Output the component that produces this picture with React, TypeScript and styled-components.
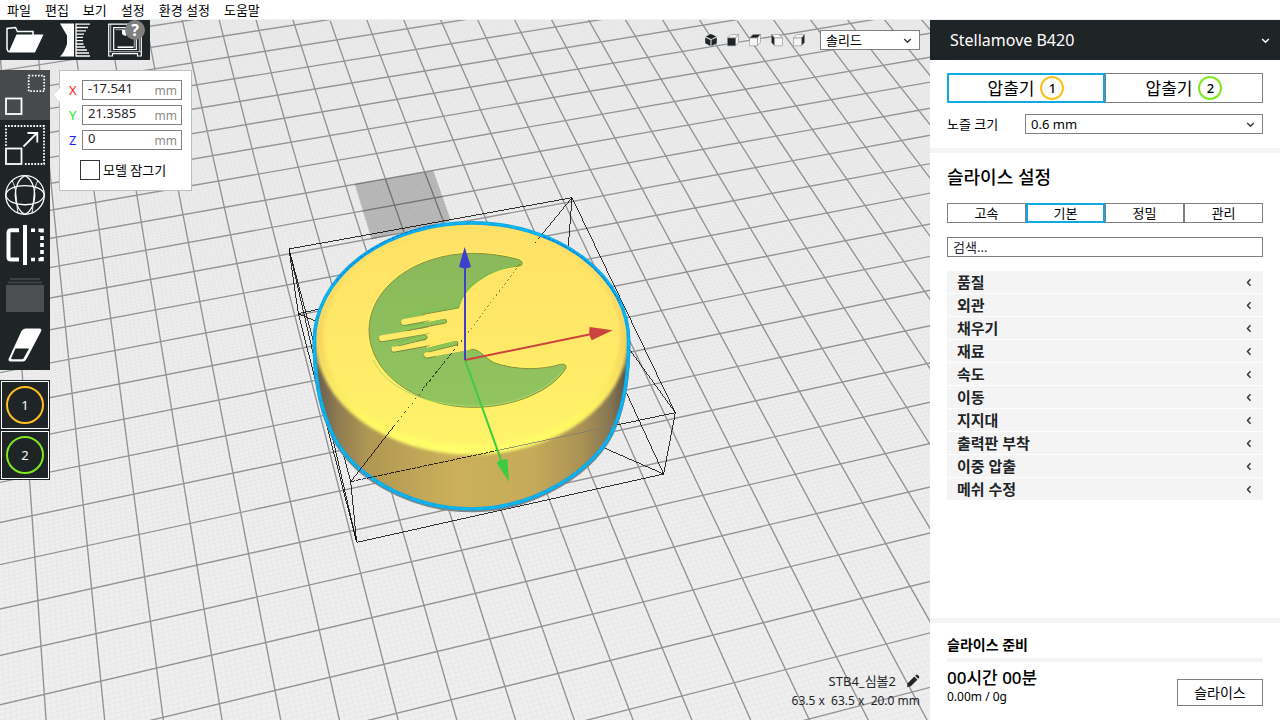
import React from 'react';
import styled, { createGlobalStyle } from 'styled-components';

const dark = '#1f2427';
const accent = '#11a9e2';
const line = '#7f7f7f';
const soft = '#f4f4f4';

const GlobalStyle = createGlobalStyle`
  *, *::before, *::after { box-sizing: border-box; }
  body {
    margin: 0;
    background: #fff;
    color: #000;
    font-family: "Noto Sans", "Noto Sans CJK KR", sans-serif;
    font-size: 13px;
    line-height: 20px;
  }
  button, input, select { font: inherit; color: inherit; margin: 0; }
  button { cursor: pointer; }
`;

/* ---------- build plate projection ---------- */

type Point = [number, number];

const plateAnchors: { cell: Point; screen: Point }[] = [
  { cell: [-1, 4], screen: [44.3, 694.3] },
  { cell: [0, -9], screen: [53.7, 209.7] },
  { cell: [22, -9], screen: [883.3, 65.3] },
  { cell: [14, 7], screen: [886.3, 644] },
];

function solve(matrix: number[][]): number[] {
  const n = matrix.length;
  const m = matrix.map((r) => [...r]);
  for (let c = 0; c < n; c++) {
    let pivot = c;
    for (let r = c + 1; r < n; r++) if (Math.abs(m[r][c]) > Math.abs(m[pivot][c])) pivot = r;
    [m[c], m[pivot]] = [m[pivot], m[c]];
    for (let r = 0; r < n; r++) {
      if (r === c) continue;
      const f = m[r][c] / m[c][c];
      for (let k = c; k <= n; k++) m[r][k] -= f * m[c][k];
    }
  }
  return m.map((r, i) => r[n] / r[i]);
}

const camera = solve(
  plateAnchors.flatMap(({ cell: [u, v], screen: [x, y] }) => [
    [u, v, 1, 0, 0, 0, -u * x, -v * x, x],
    [0, 0, 0, u, v, 1, -u * y, -v * y, y],
  ]),
);

function project(u: number, v: number): string {
  const [a, b, c, d, e, f, g, h] = camera;
  const w = g * u + h * v + 1;
  return `${((a * u + b * v + c) / w).toFixed(2)} ${((d * u + e * v + f) / w).toFixed(2)}`;
}

const PLATE = { u0: -6, u1: 32, v0: -22, v1: 13 };

function gridPath(step: number, skipWhole: boolean): string {
  const parts: string[] = [];
  const { u0, u1, v0, v1 } = PLATE;
  const per = Math.round(1 / step);
  for (let i = u0 * per; i <= u1 * per; i++) {
    if (skipWhole && i % per === 0) continue;
    parts.push(`M${project(i / per, v0)}L${project(i / per, v1)}`);
  }
  for (let j = v0 * per; j <= v1 * per; j++) {
    if (skipWhole && j % per === 0) continue;
    parts.push(`M${project(u0, j / per)}L${project(u1, j / per)}`);
  }
  return parts.join('');
}

const majorGrid = gridPath(1, false);
const minorGrid = gridPath(0.1, true);

/* ---------- 3D scene ---------- */

const SceneSvg = styled.svg`
  position: absolute;
  inset: 0;
  width: 100%;
  height: 100%;
  display: block;
`;

const discOutline =
  'M133 543A471 354 0 0 1 1076 543C1076 640 1062 730 1035 795C985 930 790 1047 605 1047C420 1047 232 945 178 800C150 735 133 640 133 543Z';
const crescent =
  'M748 299C700 286 650 280 605 280A311 231 0 0 0 297 511A313 231 0 0 0 610 742C735 742 850 690 888 624Q890 610 872 613C815 630 740 632 672 608C645 594 628 566 604 568L470 590L460 463L566 444C574 395 640 325 750 318Q766 312 748 299Z';

function Scene() {
  return (
    <SceneSvg viewBox="0 20 930 700" preserveAspectRatio="xMinYMin slice" aria-hidden="true">
      <defs>
        <linearGradient id="plate" x1="0" y1="0" x2="0" y2="1">
          <stop offset="0" stopColor="#ececec" />
          <stop offset="0.5" stopColor="#f1f1f1" />
          <stop offset="1" stopColor="#f4f4f4" />
        </linearGradient>
        <linearGradient id="side" gradientUnits="userSpaceOnUse" x1="145" y1="0" x2="1070" y2="0">
          <stop offset="0" stopColor="#6d604c" />
          <stop offset="0.06" stopColor="#8d7a52" />
          <stop offset="0.16" stopColor="#b09752" />
          <stop offset="0.45" stopColor="#ccb15a" />
          <stop offset="0.7" stopColor="#c5aa59" />
          <stop offset="0.86" stopColor="#a99155" />
          <stop offset="0.95" stopColor="#857452" />
          <stop offset="1" stopColor="#5f5546" />
        </linearGradient>
        <linearGradient id="back" gradientUnits="userSpaceOnUse" x1="0" y1="500" x2="0" y2="640">
          <stop offset="0" stopColor="#ffe066" />
          <stop offset="1" stopColor="#ffe066" stopOpacity="0" />
        </linearGradient>
        <linearGradient id="top" x1="0" y1="0" x2="0" y2="1">
          <stop offset="0" stopColor="#ffe067" />
          <stop offset="0.6" stopColor="#ffea68" />
          <stop offset="1" stopColor="#fff46a" />
        </linearGradient>
        <linearGradient id="rim" x1="0" y1="0" x2="0" y2="1">
          <stop offset="0" stopColor="#ffe066" />
          <stop offset="0.5" stopColor="#f5d55f" />
          <stop offset="0.85" stopColor="#fff763" />
          <stop offset="1" stopColor="#ffff6c" />
        </linearGradient>
        <linearGradient id="green" x1="0" y1="0" x2="0" y2="1">
          <stop offset="0" stopColor="#8ab95b" />
          <stop offset="1" stopColor="#91c45f" />
        </linearGradient>
        <filter id="blur5" x="-10%" y="-10%" width="120%" height="120%">
          <feGaussianBlur stdDeviation="5" />
        </filter>
        <clipPath id="disc">
          <path d={discOutline} />
        </clipPath>
      </defs>

      <rect x="-100" y="-100" width="4000" height="3000" fill="url(#plate)" />
      <path d={minorGrid} fill="none" stroke="#dcdcdc" strokeOpacity="0.5" strokeWidth="0.7" />
      <path d={majorGrid} fill="none" stroke="#939496" strokeWidth="1.4" />

      <g transform="translate(270 160) scale(0.33333)">
        <path d="M254 72L490 32L543 183L305 238Z" fill="#000" fillOpacity="0.22" />

        <g fill="none" stroke="#000" strokeWidth="2.4" shapeRendering="crispEdges">
          <path d="M57 267L906 113L1216 758L1181 942L260 1147L242 965L57 267L85 461L260 1147L57 267" />
          <path d="M85 461L150 447M85 461L140 485M906 113L895 258M906 113L820 218M1216 758L1080 570M1181 942L1070 700M1181 942L1005 865" />
        </g>

        <path d={discOutline} fill="none" stroke="#858585" strokeWidth="10" transform="translate(0 5)" />
        <path d={discOutline} fill="url(#side)" />
        <g clipPath="url(#disc)">
          <rect x="120" y="170" width="970" height="470" fill="url(#back)" />
          <ellipse cx="605" cy="544" rx="467" ry="340" fill="url(#rim)" filter="url(#blur5)" />
          <ellipse cx="605" cy="530" rx="446" ry="326" fill="url(#top)" filter="url(#blur5)" />
        </g>

        <path d={crescent} fill="none" stroke="#fff35c" strokeWidth="10" />
        <path d={crescent} fill="url(#green)" stroke="#8c8b45" strokeWidth="3" />
        <path d="M310 600C350 690 480 738 610 738C730 738 830 695 880 630" fill="none" stroke="#a8dc68" strokeWidth="3" />
        <path d="M750 314C680 322 585 370 568 436L400 468" fill="none" stroke="#7cc455" strokeWidth="4" />

        <g fill="none" strokeLinecap="round">
          <g stroke="#74853f" strokeWidth="20">
            <path d="M402 488L470 475M336 537L470 512M373 568L470 550M471 586L490 582" />
          </g>
          <g stroke="#ffe967" strokeWidth="18">
            <path d="M402 486L556 458M336 535L560 497M373 566L590 527M471 584L596 561" />
          </g>
          <g stroke="#ffe967" strokeWidth="26">
            <path d="M577 470L600 540M550 510L580 520M520 505L555 525L500 528" />
          </g>
          <g stroke="#76813f" strokeWidth="14">
            <path d="M412 506L524 484M385 552L466 532M476 570L558 550" />
          </g>
          <g stroke="#8cc45a" strokeWidth="11">
            <path d="M396 508L523 483M372 555L465 531M466 572L557 549" />
          </g>
          <g stroke="#78cf55" strokeWidth="2">
            <path d="M400 503L520 479M376 549L462 528M470 566L554 545" />
          </g>
        </g>

        <path d={discOutline} fill="none" stroke="#10a8e6" strokeWidth="11" />
        <path d={discOutline} fill="none" stroke="#00c8ff" strokeWidth="3" strokeDasharray="26 12" />
        <path
          d="M200 362C290 255 400 212 500 194M820 230C930 270 1010 350 1050 430"
          fill="none"
          stroke="#0a68d0"
          strokeWidth="3"
          strokeDasharray="9 5"
        />

        <g fill="none" stroke="#000" strokeWidth="2.4" shapeRendering="crispEdges">
          <path d="M242 965L372 798" />
          <path d="M372 798L585 530" strokeDasharray="5 12" stroke="#222" />
          <path d="M545 580L455 690" stroke="#222" strokeDasharray="9 5" />
          <path d="M585 530L760 298" strokeDasharray="6 8" stroke="#776b3c" />
          <path d="M796 250L820 218" strokeDasharray="4 14" />
          <path d="M242 965L680 872" strokeDasharray="14 3" />
          <path d="M680 872L1040 795" stroke="#7d7d74" />
          <path d="M1040 795L1216 758" />
        </g>

        <path d="M585 600L695 905" stroke="#3fcb3f" strokeWidth="6" />
        <path d="M717 966L680 910Q684 898 712 897Z" fill="#3fcb3f" />
        <path d="M585 600L965 522" stroke="#cc433f" strokeWidth="6" />
        <path d="M1028 511L959 501Q955 525 965 541Z" fill="#cc433f" />
        <path d="M585 600V315" stroke="#4040cb" strokeWidth="6" />
        <path d="M584 261L567 320Q584 331 603 320Z" fill="#4040cb" />
      </g>
    </SceneSvg>
  );
}

/* ---------- page frame ---------- */

const Page = styled.div`
  display: flex;
  flex-direction: column;
  min-height: 100vh;
`;

const MenuBar = styled.nav`
  display: flex;
  gap: 14px;
  height: 20px;
  padding: 0 7px;
  border-bottom: 1px solid #eef1f1;
`;

const MenuItem = styled.button`
  padding: 0;
  border: 0;
  background: none;
  line-height: 20px;
`;

const Workspace = styled.div`
  flex: 1;
  display: flex;
`;

const Viewport = styled.main`
  position: relative;
  flex: 1;
  min-width: 0;
  display: flex;
  flex-direction: column;
  justify-content: space-between;
  overflow: hidden;
`;

const Layer = styled.div`
  position: relative;
  display: flex;
  justify-content: space-between;
  align-items: flex-start;
`;

const ToolColumn = styled.div`
  display: flex;
  flex-direction: column;
  align-items: flex-start;
  gap: 10px;
`;

const TopToolbar = styled.div`
  display: flex;
  background: ${dark};
`;

const TopTool = styled.button`
  position: relative;
  width: 50px;
  height: 40px;
  padding: 0;
  border: 0;
  background: none;
  svg { display: block; }
`;

const Badge = styled.span`
  position: absolute;
  top: 0;
  right: 5px;
  width: 20px;
  height: 20px;
  border-radius: 50%;
  background: #808080;
  color: #fff;
  font-weight: 700;
  font-size: 16px;
  line-height: 20px;
  text-align: center;
`;

const ToolRow = styled.div`
  display: flex;
  align-items: flex-start;
  gap: 9px;
`;

const SideToolbar = styled.div`
  display: flex;
  flex-direction: column;
  background: ${dark};
`;

const SideTool = styled.button<{ $active?: boolean }>`
  width: 50px;
  height: 50px;
  padding: 0;
  border: 0;
  background: ${(p) => (p.$active ? '#464a4c' : 'transparent')};
  svg { display: block; }
`;

const ExtruderStack = styled.div`
  display: flex;
  flex-direction: column;
`;

const ExtruderButton = styled.button`
  display: grid;
  place-items: center;
  width: 50px;
  height: 50px;
  padding: 0;
  border: 1px solid ${dark};
  background: ${dark};
  box-shadow: inset 0 0 0 1px #fff;
  color: #fff;
`;

const Ring = styled.span<{ $color: string; $size: number }>`
  display: grid;
  place-items: center;
  width: ${(p) => p.$size}px;
  height: ${(p) => p.$size}px;
  border: 2px solid ${(p) => p.$color};
  border-radius: 50%;
  line-height: 1;
`;

/* ---------- move tool popover ---------- */

const Popover = styled.section`
  position: relative;
  display: flex;
  flex-direction: column;
  gap: 5px;
  width: 133px;
  padding: 9px 9px 10px;
  border: 1px solid #bcbfc0;
  background: #fff;
  &::before {
    content: '';
    position: absolute;
    left: -6px;
    top: 19px;
    width: 10px;
    height: 10px;
    border-left: 1px solid #d8d8d8;
    border-bottom: 1px solid #d8d8d8;
    background: #fff;
    transform: rotate(45deg);
  }
`;

const AxisRow = styled.label<{ $color: string }>`
  display: grid;
  grid-template-columns: 13px minmax(0, 1fr);
  align-items: center;
  height: 20px;
  color: ${(p) => p.$color};
`;

const AxisField = styled.span`
  display: flex;
  height: 20px;
  border: 1px solid ${line};
  background: #fff;
`;

const AxisInput = styled.input`
  flex: 1;
  width: 0;
  min-width: 0;
  padding: 0 0 4px 5px;
  border: 0;
  outline: 0;
  background: none;
  color: #1f2427;
`;

const Unit = styled.span`
  padding-right: 4px;
  color: #8a8a8a;
  font-size: 12px;
  line-height: 19px;
`;

const LockRow = styled.label`
  display: flex;
  align-items: center;
  gap: 3px;
  padding: 5px 0 0 11px;
`;

const LockBox = styled.input`
  appearance: none;
  width: 20px;
  height: 20px;
  border: 1px solid #31363b;
  background: #fff;
`;

/* ---------- view controls ---------- */

const ViewControls = styled.div`
  display: flex;
  align-items: center;
  gap: 14px;
  padding: 10px 10px 0 0;
`;

const ViewButtons = styled.div`
  display: flex;
  gap: 8px;
`;

const ViewButton = styled.button`
  width: 14px;
  height: 14px;
  padding: 0;
  border: 0;
  background: none;
  svg { display: block; }
`;

const SelectBox = styled.span<{ $width?: number }>`
  display: grid;
  align-items: center;
  width: ${(p) => (p.$width ? `${p.$width}px` : 'auto')};
  height: 20px;
  border: 1px solid ${line};
  background: #fff;
  > * { grid-area: 1 / 1; }
  svg { justify-self: end; margin-right: 7px; pointer-events: none; }
`;

const Select = styled.select`
  appearance: none;
  width: 100%;
  height: 18px;
  padding: 0 20px 0 5px;
  border: 0;
  outline: 0;
  background: none;
  line-height: 18px;
`;

const ModelInfo = styled.footer`
  position: relative;
  display: flex;
  flex-direction: column;
  align-items: flex-end;
  padding: 0 10px 9px 0;
  color: #1f2427;
  white-space: pre;
  font-size: 12px;
`;

const ModelName = styled.div`
  display: flex;
  align-items: center;
  gap: 10px;
  font-size: 13px;
`;

const EditButton = styled.button`
  width: 14px;
  height: 14px;
  padding: 0;
  border: 0;
  background: none;
  svg { display: block; }
`;

/* ---------- settings panel ---------- */

const Panel = styled.aside`
  flex: none;
  display: flex;
  flex-direction: column;
  width: 350px;
  background: #fff;
`;

const MachineHeader = styled.button`
  display: flex;
  align-items: center;
  justify-content: space-between;
  height: 40px;
  padding: 0 10px 0 20px;
  border: 0;
  background: ${dark};
  color: #fff;
  font-size: 16px;
`;

const ExtruderSection = styled.section`
  display: flex;
  flex-direction: column;
  gap: 11px;
  padding: 13px 17px 14px;
  border-bottom: 5px solid ${soft};
`;

const TabRow = styled.div<{ $height: number; $size: number }>`
  display: grid;
  grid-auto-flow: column;
  grid-auto-columns: minmax(0, 1fr);
  height: ${(p) => p.$height}px;
  font-size: ${(p) => p.$size}px;
`;

const Tab = styled.button<{ $active?: boolean }>`
  display: flex;
  align-items: center;
  justify-content: center;
  gap: 6px;
  padding: 0;
  border: ${(p) => (p.$active ? `2px solid ${accent}` : `1px solid ${line}`)};
  background: #fff;
  line-height: 1;
`;

const RingText = styled.span`
  font-size: 13px;
  font-weight: 500;
`;

const NozzleRow = styled.div`
  display: grid;
  grid-template-columns: 78px 1fr;
  align-items: center;
`;

const SettingsSection = styled.section`
  display: flex;
  flex-direction: column;
  gap: 14px;
  padding: 12px 17px;
`;

const Heading = styled.h2`
  margin: 0;
  font-size: 18px;
  font-weight: 500;
  line-height: 24px;
`;

const Search = styled.input`
  width: 100%;
  height: 20px;
  padding: 0 5px;
  border: 1px solid ${line};
  border-radius: 0;
  outline: 0;
  &::placeholder { color: #1f2427; opacity: 1; }
`;

const CategoryList = styled.div`
  display: flex;
  flex-direction: column;
  gap: 1px;
`;

const Category = styled.button`
  display: flex;
  align-items: center;
  justify-content: space-between;
  height: 22px;
  padding: 0 11px 0 10px;
  border: 0;
  background: ${soft};
  color: #1f2427;
  font-size: 15px;
  font-weight: 700;
  line-height: 20px;
`;

const JobSection = styled.section`
  margin-top: auto;
  padding: 12px 17px 14px;
  border-top: 5px solid ${soft};
`;

const JobStatus = styled.h3`
  margin: 0;
  padding-bottom: 3px;
  border-bottom: 4px solid ${soft};
  font-size: 14px;
  font-weight: 700;
`;

const JobRow = styled.div`
  display: flex;
  justify-content: space-between;
  align-items: flex-end;
  padding-top: 6px;
`;

const JobTime = styled.div`
  font-size: 17px;
  font-weight: 500;
  line-height: 20px;
`;

const JobMaterial = styled.div`
  font-size: 12px;
  line-height: 18px;
`;

const SliceButton = styled.button`
  width: 86px;
  height: 27px;
  padding: 0;
  border: 1px solid ${line};
  background: #fff;
  font-size: 14px;
`;

/* ---------- icons ---------- */

function Chevron({ color = '#31363b', left = false }: { color?: string; left?: boolean }) {
  return (
    <svg width={left ? 6 : 9} height="9" viewBox={left ? '0 0 6 9' : '0 0 9 9'} fill="none" stroke={color} strokeWidth="1.5">
      <path d={left ? 'M4.5 1.2L1.5 4.5L4.5 7.8' : 'M1.2 3L4.5 6.2L7.8 3'} />
    </svg>
  );
}

const OpenIcon = () => (
  <svg width="50" height="40" viewBox="0 0 50 40">
    <path d="M8.5 32L7 29V8.500L15.500 7.500L17.500 11.500H33V15" fill="none" stroke="#fff" strokeWidth="1.5" />
    <path d="M16.500 14.500H43.500L35 32.500H8.500Z" fill="#fff" />
  </svg>
);

const LayersIcon = () => (
  <svg width="50" height="40" viewBox="0 0 50 40">
    <path d="M10 3.5H24V36.500H10Q14 33 17 24V15.500Z" fill="#fff" />
    <path
      d="M26 4.200H40M26 7.500H38M26 10.800H36M26 14.100H34M26 17.400H33M26 20.700H33M26 24H33.500M26 27H35M26 30H37M26 33H39M26 36H40"
      stroke="#fff"
      strokeWidth="1.300"
    />
    <path d="M26 3.500V36.500" stroke="#fff" strokeWidth="1.300" />
  </svg>
);

const PrinterIcon = () => (
  <svg width="50" height="40" viewBox="0 0 50 40" fill="none" stroke="#fff" strokeWidth="1.200">
    <path d="M8.700 4.200H41.300V36H37.500V33.700H12.500V36H8.700Z" />
    <path d="M10.700 4.500V31.500M39.300 4.500V31.500M9 31.700H41" strokeWidth="0.700" />
    <path d="M13.700 7.700H36.300V29.500H13.700Z" />
    <path d="M15.700 9.700H34.300V27.500" strokeWidth="0.600" />
    <path d="M17.500 27.200H33.500" strokeWidth="1.600" />
    <path d="M22 10H28V14L25 16L22 14Z" fill="#fff" stroke="none" />
  </svg>
);

const MoveIcon = () => (
  <svg width="50" height="50" viewBox="0 0 50 50" fill="none" stroke="#fff">
    <rect x="6" y="28.500" width="15.500" height="15.500" strokeWidth="1.800" />
    <rect x="28.700" y="5.700" width="15.500" height="15.500" strokeWidth="1.800" strokeDasharray="1.600 1.500" />
  </svg>
);

const ScaleIcon = () => (
  <svg width="50" height="50" viewBox="0 0 50 50" fill="none" stroke="#fff">
    <path d="M6 26V6H44V44H24" strokeWidth="1.800" strokeDasharray="1.700 1.450" />
    <rect x="6" y="28.500" width="15.500" height="15.500" strokeWidth="1.800" />
    <path d="M23.500 26.500L37 13M27.500 13H37.300V22.500" strokeWidth="1.800" />
  </svg>
);

const RotateIcon = () => (
  <svg width="50" height="50" viewBox="0 0 50 50" fill="none" stroke="#fff" strokeWidth="1.300">
    <circle cx="25" cy="25" r="19.300" />
    <path d="M25 5.700C12 12 12 38 25 44.300C38 38 38 12 25 5.700" />
    <path d="M5.700 25C8 38 42 38 44.300 25C42 12.500 8 12.500 5.700 25" />
    <path d="M12 10.500C17 18 16 33 18 43M38 10.500C33 18 34 33 32 43" strokeWidth="0.900" />
  </svg>
);

const MirrorIcon = () => (
  <svg width="50" height="50" viewBox="0 0 50 50" fill="none" stroke="#fff">
    <path d="M25 5V45" strokeWidth="4" />
    <path d="M19 10.300H11Q8.500 10.300 8.500 13V37Q8.500 39.500 11 39.500H19" strokeWidth="4" />
    <path d="M31 10.300H35M38.500 10.300H42V12.500M42 16V20M42 23V27M42 30V34M42 37V39.500H38.500M35 39.500H31" strokeWidth="3.600" />
  </svg>
);

const MeshIcon = () => (
  <svg width="50" height="50" viewBox="0 0 50 50">
    <path d="M6 15H44V42H6Z" fill="#4b4f51" />
    <path d="M10 9H40M8 12.500H42" stroke="#3c4143" strokeWidth="1.800" />
  </svg>
);

const BlockerIcon = () => (
  <svg width="50" height="50" viewBox="0 0 50 50">
    <path
      d="M25.500 8.500H39.500Q42 8.500 41.200 11L26.500 39Q25 41.500 23 41.500H10.500Q7.800 41.500 8.800 38.500L21.500 11Q23 8.500 25.500 8.500Z"
      fill="#fff"
    />
    <path d="M15.500 28.500H29L23.500 38.500Q23 39.300 22 39.300H12Q10.700 39.300 11.300 38Z" fill={dark} />
  </svg>
);

type Cube = { front?: boolean; top?: boolean; side?: boolean; mirrored?: boolean };

function CubeIcon({ front, top, side, mirrored }: Cube) {
  const fill = (on?: boolean) => (on ? dark : '#f5f5f5');
  return (
    <svg width="14" height="14" viewBox="0 0 14 14" stroke="#8a8c8e" strokeWidth="0.600">
      <g transform={mirrored ? 'translate(14 0) scale(-1 1)' : undefined}>
        <path d="M1.500 5L5 1.500H12.500L9.500 5Z" fill={fill(top)} />
        <path d="M9.500 5L12.500 1.500V9.500L9.500 12.800Z" fill={fill(side)} />
        <path d="M1.500 5H9.500V12.800H1.500Z" fill={fill(front)} />
      </g>
    </svg>
  );
}

const IsoCube = () => (
  <svg width="14" height="14" viewBox="0 0 14 14" fill={dark}>
    <path d="M7 1L12.300 3.500L7 6L1.700 3.500Z" />
    <path d="M1.200 4.500L6.500 7V13L1.200 10.300Z" />
    <path d="M12.800 4.500L7.500 7V13L12.800 10.300Z" />
  </svg>
);

const PencilIcon = () => (
  <svg width="14" height="14" viewBox="0 0 14 14" fill={dark}>
    <path d="M8.300 2.600L11.400 5.700L4.800 12.300L1 13L1.700 9.200Z" />
    <path d="M9.200 1.700L10.300 0.700Q11 0.200 11.700 0.900L13 2.200Q13.700 3 13.100 3.700L12.200 4.800Z" />
  </svg>
);

/* ---------- data ---------- */

const menus = ['파일', '편집', '보기', '설정', '환경 설정', '도움말'];

const axes = [
  { name: 'X', color: '#ff2020', value: '-17.541' },
  { name: 'Y', color: '#20f020', value: '21.3585' },
  { name: 'Z', color: '#2020ff', value: '0' },
];

const extruders = [
  { id: 1, color: '#ffc01e' },
  { id: 2, color: '#7fe81e' },
];

const sideTools = [
  { label: '이동', icon: <MoveIcon /> },
  { label: '크기 조정', icon: <ScaleIcon /> },
  { label: '회전', icon: <RotateIcon /> },
  { label: '대칭', icon: <MirrorIcon /> },
  { label: '모델별 설정', icon: <MeshIcon /> },
  { label: '서포트 차단', icon: <BlockerIcon /> },
];

const views = [
  { label: '3D', icon: <IsoCube /> },
  { label: '앞', icon: <CubeIcon front /> },
  { label: '위', icon: <CubeIcon top /> },
  { label: '왼쪽', icon: <CubeIcon side mirrored /> },
  { label: '오른쪽', icon: <CubeIcon side /> },
];

const profiles = ['고속', '기본', '정밀', '관리'];

const categories = ['품질', '외관', '채우기', '재료', '속도', '이동', '지지대', '출력판 부착', '이중 압출', '메쉬 수정'];

/* ---------- app ---------- */

export default function App() {
  return (
    <>
      <GlobalStyle />
      <Page>
        <MenuBar>
          {menus.map((m) => (
            <MenuItem key={m} type="button">{m}</MenuItem>
          ))}
        </MenuBar>
        <Workspace>
          <Viewport>
            <Scene />
            <Layer>
              <ToolColumn>
                <TopToolbar>
                  <TopTool type="button" aria-label="열기"><OpenIcon /></TopTool>
                  <TopTool type="button" aria-label="레이어"><LayersIcon /></TopTool>
                  <TopTool type="button" aria-label="프린터">
                    <PrinterIcon />
                    <Badge>?</Badge>
                  </TopTool>
                </TopToolbar>
                <ToolRow>
                  <SideToolbar>
                    {sideTools.map((t, i) => (
                      <SideTool key={t.label} type="button" aria-label={t.label} $active={i === 0}>
                        {t.icon}
                      </SideTool>
                    ))}
                  </SideToolbar>
                  <Popover>
                    {axes.map((a) => (
                      <AxisRow key={a.name} $color={a.color}>
                        <span>{a.name}</span>
                        <AxisField>
                          <AxisInput type="text" defaultValue={a.value} />
                          <Unit>mm</Unit>
                        </AxisField>
                      </AxisRow>
                    ))}
                    <LockRow>
                      <LockBox type="checkbox" />
                      모델 잠그기
                    </LockRow>
                  </Popover>
                </ToolRow>
                <ExtruderStack>
                  {extruders.map((e) => (
                    <ExtruderButton key={e.id} type="button">
                      <Ring $color={e.color} $size={38}>{e.id}</Ring>
                    </ExtruderButton>
                  ))}
                </ExtruderStack>
              </ToolColumn>
              <ViewControls>
                <ViewButtons>
                  {views.map((v) => (
                    <ViewButton key={v.label} type="button" aria-label={v.label}>{v.icon}</ViewButton>
                  ))}
                </ViewButtons>
                <SelectBox $width={100}>
                  <Select aria-label="보기 방식" defaultValue="솔리드">
                    <option>솔리드</option>
                  </Select>
                  <Chevron />
                </SelectBox>
              </ViewControls>
            </Layer>
            <ModelInfo>
              <ModelName>
                STB4_심볼2
                <EditButton type="button" aria-label="이름 변경"><PencilIcon /></EditButton>
              </ModelName>
              <div>{'63.5 x  63.5 x  20.0 mm'}</div>
            </ModelInfo>
          </Viewport>

          <Panel>
            <MachineHeader type="button">
              Stellamove B420
              <Chevron color="#fff" />
            </MachineHeader>
            <ExtruderSection>
              <TabRow $height={30} $size={17}>
                {extruders.map((e, i) => (
                  <Tab key={e.id} type="button" $active={i === 0}>
                    압출기
                    <Ring $color={e.color} $size={24}><RingText>{e.id}</RingText></Ring>
                  </Tab>
                ))}
              </TabRow>
              <NozzleRow>
                <label htmlFor="nozzle">노즐 크기</label>
                <SelectBox>
                  <Select id="nozzle" defaultValue="0.6 mm">
                    <option>0.6 mm</option>
                  </Select>
                  <Chevron />
                </SelectBox>
              </NozzleRow>
            </ExtruderSection>
            <SettingsSection>
              <Heading>슬라이스 설정</Heading>
              <TabRow $height={20} $size={13}>
                {profiles.map((p, i) => (
                  <Tab key={p} type="button" $active={i === 1}>{p}</Tab>
                ))}
              </TabRow>
              <Search type="text" placeholder="검색..." aria-label="검색" />
              <CategoryList>
                {categories.map((c) => (
                  <Category key={c} type="button">
                    {c}
                    <Chevron left />
                  </Category>
                ))}
              </CategoryList>
            </SettingsSection>
            <JobSection>
              <JobStatus>슬라이스 준비</JobStatus>
              <JobRow>
                <div>
                  <JobTime>00시간 00분</JobTime>
                  <JobMaterial>0.00m / 0g</JobMaterial>
                </div>
                <SliceButton type="button">슬라이스</SliceButton>
              </JobRow>
            </JobSection>
          </Panel>
        </Workspace>
      </Page>
    </>
  );
}
